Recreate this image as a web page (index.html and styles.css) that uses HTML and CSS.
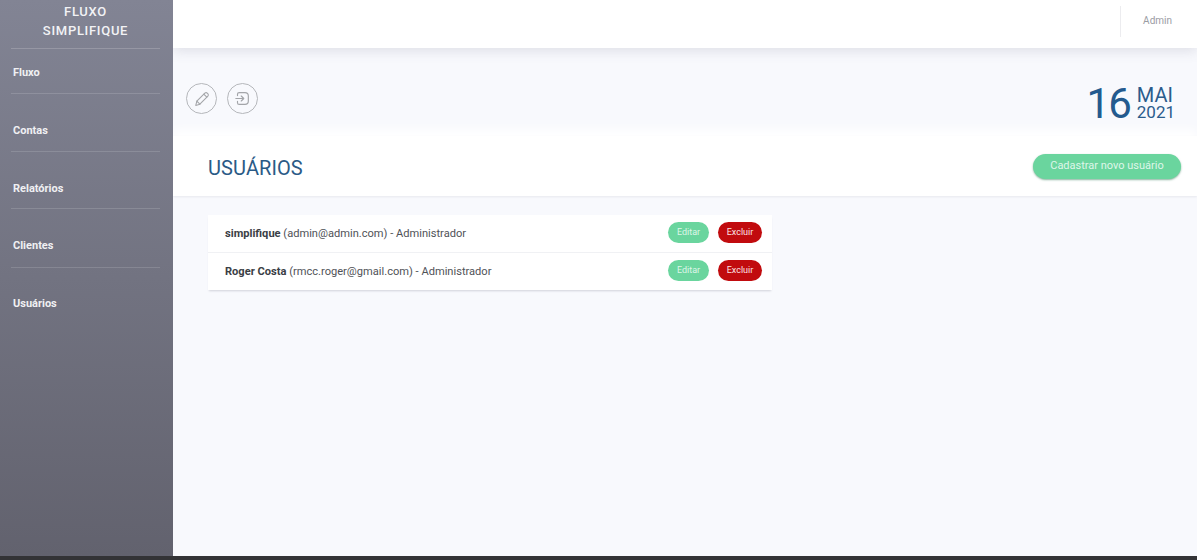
FILE: index.html
```html
<!DOCTYPE html>
<html lang="pt-BR">
<head>
    <meta charset="UTF-8">
    <title>Fluxo Simplifique - Usuários</title>
    <link rel="stylesheet" href="styles.css">
</head>
<body>
    <div class="app">
        <!-- Menu lateral -->
        <aside class="sidebar">
            <div class="brand">FLUXO<br>SIMPLIFIQUE</div>
            <nav class="menu">
                <a class="menu-item" href="#">Fluxo</a>
                <a class="menu-item" href="#">Contas</a>
                <a class="menu-item" href="#">Relatórios</a>
                <a class="menu-item" href="#">Clientes</a>
                <a class="menu-item" href="#">Usuários</a>
            </nav>
        </aside>

        <div class="main">
            <header class="topbar">
                <div class="topbar-user">Admin</div>
            </header>

            <div class="toolbar">
                <div class="round-btns">
                    <button class="round-btn" aria-label="Editar">
                        <svg width="16" height="16" viewBox="0 0 18 18" fill="none" stroke="#a3a5a9" stroke-width="1.2" stroke-linejoin="round" stroke-linecap="round">
                            <path d="M2 16.2 L3.2 11.4 L12.2 2.4 Q13.6 1.2 14.9 2.4 L15.7 3.2 Q16.8 4.6 15.6 5.8 L6.6 14.9 Z"/>
                            <path d="M3.2 11.4 L6.6 14.9 M11 3.6 L14.4 7"/>
                        </svg>
                    </button>
                    <button class="round-btn" aria-label="Sair">
                        <svg width="15" height="15" viewBox="0 0 18 18" fill="none" stroke="#a3a5a9" stroke-width="1.4" stroke-linejoin="round" stroke-linecap="round">
                            <path d="M3 5.5 V4 Q3 2 5 2 H12 Q16 2 16 6 V12 Q16 16 12 16 H5 Q3 16 3 14 V12.5"/>
                            <path d="M1 9 H10.5 M7.5 6 L10.5 9 L7.5 12"/>
                        </svg>
                    </button>
                </div>
                <div class="date">
                    <span class="date-day">16</span>
                    <span class="date-rest"><span class="date-month">MAI</span><span class="date-year">2021</span></span>
                </div>
            </div>

            <section class="section-head">
                <h1>USUÁRIOS</h1>
                <a class="btn btn-new" href="#">Cadastrar novo usuário</a>
            </section>

            <div class="content">
                <ul class="user-list">
                    <li class="user-row">
                        <span class="user-info"><b>simplifique</b> (admin@admin.com) - Administrador</span>
                        <span class="user-actions">
                            <a class="btn btn-edit" href="#">Editar</a>
                            <a class="btn btn-del" href="#">Excluir</a>
                        </span>
                    </li>
                    <li class="user-row">
                        <span class="user-info"><b>Roger Costa</b> (rmcc.roger@gmail.com) - Administrador</span>
                        <span class="user-actions">
                            <a class="btn btn-edit" href="#">Editar</a>
                            <a class="btn btn-del" href="#">Excluir</a>
                        </span>
                    </li>
                </ul>
            </div>
        </div>
    </div>
    <div class="bottom-strip"></div>
</body>
</html>
```

FILE: styles.css
```css
/* General */
* {
    box-sizing: border-box;
}

html, body {
    margin: 0;
    padding: 0;
    height: 560px;
    overflow: hidden;
}

body {
    font-family: Roboto, 'Liberation Sans', sans-serif;
    background: #f8f9fd;
    color: #333;
}

.app {
    display: flex;
    height: 556px;
}

.bottom-strip {
    height: 4px;
    background: #333336;
}

/* Sidebar */
.sidebar {
    width: 173px;
    flex-shrink: 0;
    padding: 0 13px 0 11px;
    background: linear-gradient(180deg, #828494 0%, #62626e 100%);
    color: #fff;
}

.brand {
    height: 49px;
    padding-top: 2px;
    border-bottom: 1px solid rgba(255, 255, 255, 0.18);
    font-size: 13px;
    font-weight: 500;
    line-height: 19px;
    letter-spacing: 0.7px;
    text-align: center;
    color: #f2f2f5;
}

.menu-item {
    display: block;
    height: 58px;
    padding: 17px 0 0 2px;
    border-bottom: 1px solid rgba(255, 255, 255, 0.14);
    font-size: 11px;
    font-weight: 700;
    line-height: 13px;
    color: #f0f0f3;
    text-decoration: none;
}

.menu-item:first-child {
    height: 45px;
}

.menu-item:last-child {
    border-bottom: 0;
}

.menu-item + .menu-item {
    padding-top: 30px;
}

.menu-item:nth-child(3) {
    height: 57px;
}

.menu-item:nth-child(4) {
    height: 59px;
    padding-top: 30px;
}

.menu-item:nth-child(5) {
    padding-top: 29px;
}

/* Main */
.main {
    flex: 1;
    min-width: 0;
    overflow: hidden;
}

.topbar {
    height: 48px;
    padding: 6px 24px 0 0;
    background: #fff;
    box-shadow: 0 3px 12px rgba(90, 90, 110, 0.16);
    position: relative;
    display: flex;
    justify-content: flex-end;
}

.topbar-user {
    height: 31px;
    padding: 8px 0 0 22px;
    margin-right: 1px;
    border-left: 1px solid #ececef;
    font-size: 10px;
    line-height: 13px;
    color: #9a9ca3;
}

.toolbar {
    height: 88px;
    padding: 35px 22px 0 13px;
    display: flex;
    justify-content: space-between;
    align-items: flex-start;
}

.round-btns {
    display: flex;
    gap: 10px;
}

.round-btn {
    width: 31px;
    height: 31px;
    padding: 0;
    border: 1px solid #b5b7bb;
    border-radius: 50%;
    background: transparent;
    display: flex;
    align-items: center;
    justify-content: center;
}

.date {
    display: flex;
    align-items: center;
    gap: 7px;
    color: #235a8e;
    margin-top: -1px;
}

.date-day {
    font-size: 42px;
    line-height: 44px;
    letter-spacing: -2px;
}

.date-rest {
    display: flex;
    flex-direction: column;
    font-size: 20px;
    line-height: 17px;
    color: #2b5c8c;
}

.date-year {
    font-size: 17px;
}

.section-head {
    height: 60px;
    padding: 18px 16px 0 35px;
    background: #fff;
    box-shadow: 0 1px 2px rgba(90, 90, 110, 0.1), 0 -6px 10px #fff;
    display: flex;
    justify-content: space-between;
    align-items: flex-start;
}

.section-head h1 {
    margin: 2px 0 0;
    font-size: 20px;
    font-weight: 400;
    line-height: 24px;
    letter-spacing: 0.1px;
    color: #2a5a86;
}

/* Buttons */
.btn {
    display: block;
    border-radius: 13px;
    color: #dff5e9;
    text-align: center;
    text-decoration: none;
}

.btn-new {
    width: 148px;
    height: 25px;
    font-size: 11px;
    line-height: 24px;
    background: #6ad59e;
    box-shadow: 0 1px 2px rgba(60, 130, 95, 0.6);
}

.btn-edit,
.btn-del {
    height: 21px;
    font-size: 9px;
    line-height: 21px;
}

.btn-edit {
    width: 41px;
    background: #6ad59e;
}

.btn-del {
    width: 44px;
    background: #c10b0e;
    color: #fbe3e3;
}

/* User list */
.content {
    padding: 19px 35px;
}

.user-list {
    width: 564px;
    margin: 0;
    padding: 0;
    list-style: none;
    background: #fff;
    box-shadow: 0 2px 2px -1px rgba(90, 90, 110, 0.25);
}

.user-row {
    height: 37px;
    padding: 0 10px 0 17px;
    display: flex;
    align-items: center;
    justify-content: space-between;
    font-size: 11.1px;
    color: #4f5257;
}

.user-row + .user-row {
    height: 38px;
    border-top: 1px solid #f0f1f4;
}

.user-info b {
    font-weight: 700;
    color: #3a3e45;
}

.user-actions {
    display: flex;
    gap: 9px;
    padding-bottom: 2px;
}
```
